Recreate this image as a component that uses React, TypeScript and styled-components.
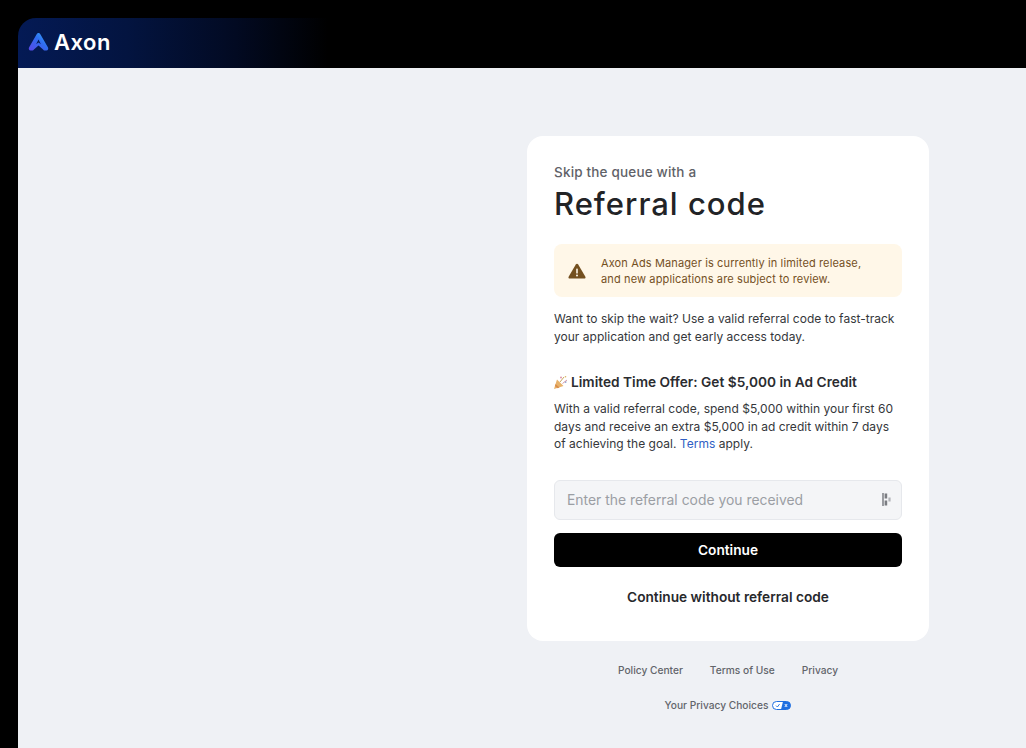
import React from 'react'
import styled, { createGlobalStyle } from 'styled-components'

const GlobalStyle = createGlobalStyle`
  html, body {
    margin: 0;
    padding: 0;
    height: 100%;
    background: #000;
  }
  body {
    font-family: Inter, "Liberation Sans", sans-serif;
    overflow: hidden;
  }
`

//--------------------------------------
// style
//--------------------------------------
const Frame = styled.div`
  width: 1026px;
  height: 748px;
  box-sizing: border-box;
  padding: 18px 0 0 18px;
  background: #000;
  overflow: hidden;
`

const Shell = styled.div`
  height: 730px;
  display: flex;
  flex-direction: column;
`

const Header = styled.header`
  height: 50px;
  flex: none;
  box-sizing: border-box;
  display: flex;
  align-items: center;
  gap: 5px;
  padding: 0 0 2px 10px;
  background: #000 linear-gradient(90deg, #041a55 0%, #031440 35%, #020a22 70%, #000 100%) no-repeat;
  background-size: 310px 100%;
  border-top-left-radius: 18px;
`

const LogoText = styled.span`
  font-size: 22px;
  font-weight: 600;
  color: #fff;
  letter-spacing: 0.5px;
`

const Main = styled.main`
  flex: 1;
  display: flex;
  flex-direction: column;
  align-items: flex-end;
  padding: 68px 97px 0 0;
  background: #eff1f5;
`

const Card = styled.section`
  width: 402px;
  height: 505px;
  box-sizing: border-box;
  padding: 28px 27px 0;
  background: #fff;
  border-radius: 16px;
`

const Eyebrow = styled.p`
  margin: 0;
  font-size: 13.5px;
  line-height: 17px;
  font-weight: 500;
  color: #5f6268;
  letter-spacing: 0.18px;
`

const Title = styled.h1`
  margin: 4px 0 0;
  font-size: 31px;
  line-height: 38px;
  font-weight: 500;
  color: #222326;
  letter-spacing: 1px;
`

const Notice = styled.div`
  margin-top: 21px;
  height: 53px;
  display: flex;
  align-items: center;
  gap: 15px;
  padding-left: 14px;
  background: #fff7e8;
  border-radius: 8px;
  font-size: 11px;
  line-height: 16px;
  color: #74501f;
  letter-spacing: 0.13px;
`

const Body = styled.p`
  margin: 0;
  font-size: 12px;
  line-height: 17.6px;
  color: #35373b;
  letter-spacing: 0.02px;
`

const Intro = styled(Body)`
  margin-top: 13px;
  line-height: 18px;
`

const OfferTitle = styled.h2`
  margin: 27px 0 0;
  display: flex;
  align-items: center;
  gap: 3px;
  font-size: 13.7px;
  line-height: 18px;
  font-weight: 600;
  color: #2b2c30;
`

const OfferBody = styled(Body)`
  margin-top: 9px;
`

const TermsLink = styled.a`
  color: #2f5fc4;
  text-decoration: none;
`

const Field = styled.div`
  margin-top: 27px;
  height: 40px;
  box-sizing: border-box;
  display: flex;
  align-items: center;
  justify-content: space-between;
  padding: 0 9px 0 12px;
  background: #f4f5f7;
  border: 1px solid #e6e8ec;
  border-radius: 6px;
`

const FieldInput = styled.input`
  flex: 1;
  min-width: 0;
  border: 0;
  padding: 0;
  outline: none;
  background: transparent;
  font-family: inherit;
  font-size: 13.9px;

  &::placeholder {
    color: #9b9ea4;
    opacity: 1;
  }
`

const PrimaryButton = styled.button`
  display: block;
  width: 100%;
  height: 34px;
  margin-top: 13px;
  border: 0;
  border-radius: 6px;
  background: #000;
  color: #fff;
  font-family: inherit;
  font-size: 13.7px;
  font-weight: 600;
`

const GhostButton = styled.button`
  display: block;
  width: 100%;
  height: 34px;
  margin-top: 13px;
  padding: 0;
  border: 0;
  background: transparent;
  color: #27282c;
  font-family: inherit;
  font-size: 13.7px;
  font-weight: 600;
`

const FooterLinks = styled.nav`
  align-self: flex-end;
  width: 402px;
  display: flex;
  justify-content: center;
  gap: 27px;
  margin-top: 22px;
`

const FooterRow = styled(FooterLinks)`
  align-items: center;
  gap: 4px;
  margin-top: 21px;
`

const FooterLink = styled.a`
  font-size: 10.2px;
  line-height: 14px;
  font-weight: 500;
  color: #62656b;
`

//----------------------------------
// icons
//----------------------------------
const AxonLogo = () => (
  <svg width="21" height="20" viewBox="0 0 21 20">
    <defs>
      <linearGradient id="axonA" x1="0" y1="1" x2="1" y2="0">
        <stop offset="0" stopColor="#5a46e6" />
        <stop offset="0.55" stopColor="#2f6cf0" />
        <stop offset="1" stopColor="#36b0fa" />
      </linearGradient>
    </defs>
    <path
      d="M10.5 1 C9.5 1 9 1.7 8.5 2.6 L1 15.6 C0.4 16.8 1 18.6 2.6 18.6 L4 18.6 C5 18.6 5.6 18 6.2 17.2 L10.5 13.4 L14.8 17.2 C15.4 18 16 18.6 17 18.6 L18.4 18.6 C20 18.6 20.6 16.8 20 15.6 L12.5 2.6 C12 1.7 11.5 1 10.5 1 Z M10.5 7.6 L12.9 12.2 L10.5 10.4 L8.1 12.2 Z"
      fill="url(#axonA)"
      fillRule="evenodd"
    />
  </svg>
)

const WarningIcon = () => (
  <svg width="18" height="16" viewBox="0 0 18 16">
    <path
      d="M9 0.8 C9.5 0.8 9.9 1 10.2 1.5 L17.4 13.8 C17.9 14.7 17.3 15.6 16.3 15.6 L1.7 15.6 C0.7 15.6 0.1 14.7 0.6 13.8 L7.8 1.5 C8.1 1 8.5 0.8 9 0.8 Z"
      fill="#74501f"
    />
    <rect x="8.2" y="5.4" width="1.6" height="5.2" rx="0.7" fill="#fff7e8" />
    <circle cx="9" cy="12.6" r="1" fill="#fff7e8" />
  </svg>
)

const PartyIcon = () => (
  <svg width="15" height="15" viewBox="0 0 15 15" style={{ marginLeft: -1 }}>
    <path d="M1 14 L4 4.5 L10.5 11 Z" fill="#e8b26a" />
    <path d="M2.6 9 L6.5 12.6 L4.6 13.2 L1.9 11 Z" fill="#d98d4a" />
    <circle cx="8" cy="2.5" r="0.9" fill="#d98ba0" />
    <circle cx="12.6" cy="7" r="0.9" fill="#8aa9d8" />
    <path d="M7 7 L11 2" stroke="#c9a75e" strokeWidth="1" />
    <path d="M9.5 8.5 L14 5" stroke="#d79aa8" strokeWidth="1" />
    <circle cx="12.5" cy="1.8" r="0.8" fill="#d9b25e" />
  </svg>
)

const FieldIcon = () => (
  <svg width="10" height="13" viewBox="0 0 10 13">
    <rect x="0" y="0" width="2" height="13" fill="#9a9ca1" />
    <rect x="2.6" y="0.5" width="2.6" height="5" fill="#7b7d82" />
    <rect x="2.6" y="7.5" width="2.6" height="5" fill="#7b7d82" />
    <rect x="6.4" y="4.5" width="2.2" height="4" fill="#b2b4b8" />
  </svg>
)

const PrivacyToggle = () => (
  <svg width="19" height="9" viewBox="0 0 19 9">
    <rect x="0.5" y="0.5" width="18" height="8" rx="4" fill="#fff" stroke="#1f6fe0" />
    <path d="M11 0.5 H14.5 A4 4 0 0 1 14.5 8.5 H9 Z" fill="#1f6fe0" />
    <path d="M4 4.6 L5.4 6 L7.6 3" fill="none" stroke="#1f6fe0" strokeWidth="0.9" />
    <path d="M12.8 3 L15.2 6 M15.2 3 L12.8 6" stroke="#fff" strokeWidth="0.9" />
  </svg>
)

//----------------------------------
// component
//----------------------------------
const App = () => {
  return (
    <Frame>
      <GlobalStyle />
      <Shell>
        <Header>
          <AxonLogo />
          <LogoText>Axon</LogoText>
        </Header>
        <Main>
          <Card>
            <Eyebrow>Skip the queue with a</Eyebrow>
            <Title>Referral code</Title>

            <Notice>
              <WarningIcon />
              <div>
                Axon Ads Manager is currently in limited release,
                <br />
                and new applications are subject to review.
              </div>
            </Notice>

            <Intro>
              Want to skip the wait? Use a valid referral code to fast-track
              <br />
              your application and get early access today.
            </Intro>

            <OfferTitle>
              <PartyIcon />
              Limited Time Offer: Get $5,000 in Ad Credit
            </OfferTitle>
            <OfferBody>
              With a valid referral code, spend $5,000 within your first 60
              <br />
              days and receive an extra $5,000 in ad credit within 7 days
              <br />
              of achieving the goal. <TermsLink>Terms</TermsLink> apply.
            </OfferBody>

            <Field>
              <FieldInput placeholder="Enter the referral code you received" />
              <FieldIcon />
            </Field>

            <PrimaryButton>Continue</PrimaryButton>
            <GhostButton>Continue without referral code</GhostButton>
          </Card>

          <FooterLinks>
            <FooterLink>Policy Center</FooterLink>
            <FooterLink>Terms of Use</FooterLink>
            <FooterLink>Privacy</FooterLink>
          </FooterLinks>
          <FooterRow>
            <FooterLink>Your Privacy Choices</FooterLink>
            <PrivacyToggle />
          </FooterRow>
        </Main>
      </Shell>
    </Frame>
  )
}

export default App
